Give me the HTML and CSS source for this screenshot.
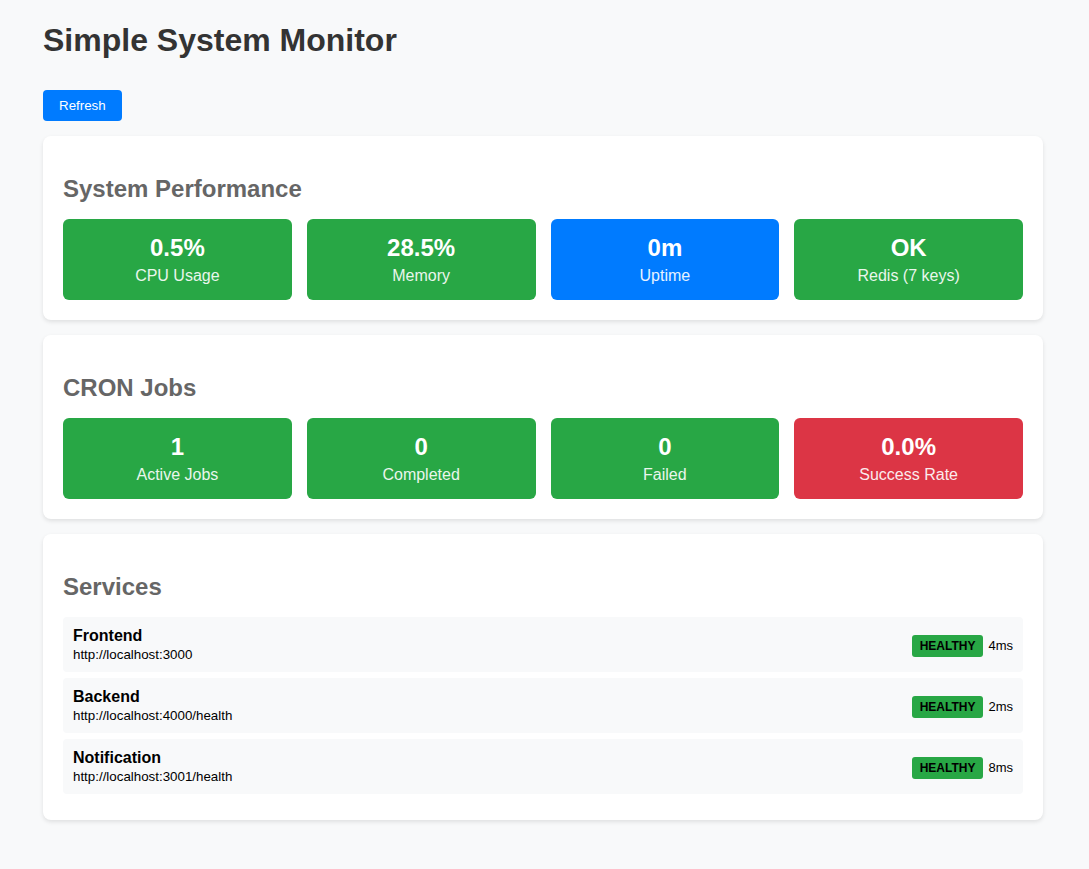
FILE: index.html
```html
<!DOCTYPE html>
<html lang="en">
<head>
<meta charset="utf-8">
<title>Simple System Monitor</title>
<link rel="stylesheet" href="styles.css">
</head>
<body>
<div class="page">
  <div class="container">
    <h1 class="title">Simple System Monitor</h1>
    <button class="btn-refresh">Refresh</button>

    <section class="card">
      <h2 class="card-title">System Performance</h2>
      <div class="metrics">
        <div class="metric green"><div class="metric-value">0.5%</div><div class="metric-label">CPU Usage</div></div>
        <div class="metric green"><div class="metric-value">28.5%</div><div class="metric-label">Memory</div></div>
        <div class="metric blue"><div class="metric-value">0m</div><div class="metric-label">Uptime</div></div>
        <div class="metric green"><div class="metric-value">OK</div><div class="metric-label">Redis (7 keys)</div></div>
      </div>
    </section>

    <section class="card">
      <h2 class="card-title">CRON Jobs</h2>
      <div class="metrics">
        <div class="metric green"><div class="metric-value">1</div><div class="metric-label">Active Jobs</div></div>
        <div class="metric green"><div class="metric-value">0</div><div class="metric-label">Completed</div></div>
        <div class="metric green"><div class="metric-value">0</div><div class="metric-label">Failed</div></div>
        <div class="metric red"><div class="metric-value">0.0%</div><div class="metric-label">Success Rate</div></div>
      </div>
    </section>

    <section class="card card-services">
      <h2 class="card-title">Services</h2>
      <div class="service">
        <div class="service-info"><div class="service-name">Frontend</div><div class="service-url">http://localhost:3000</div></div>
        <div class="service-status"><span class="badge">HEALTHY</span><span class="latency">4ms</span></div>
      </div>
      <div class="service">
        <div class="service-info"><div class="service-name">Backend</div><div class="service-url">http://localhost:4000/health</div></div>
        <div class="service-status"><span class="badge">HEALTHY</span><span class="latency">2ms</span></div>
      </div>
      <div class="service">
        <div class="service-info"><div class="service-name">Notification</div><div class="service-url">http://localhost:3001/health</div></div>
        <div class="service-status"><span class="badge">HEALTHY</span><span class="latency">8ms</span></div>
      </div>
    </section>
  </div>
</div>
</body>
</html>
```

FILE: styles.css
```css
* { box-sizing: border-box; }

html, body {
  margin: 0;
  background: #f8f9fa;
  font-family: "Liberation Sans", Arial, sans-serif;
  color: #000;
}

.page {
  padding: 22px 0 40px 43px;
}

.container {
  width: 1000px;
}

.title {
  margin: 0 0 31px;
  font-size: 32px;
  line-height: normal;
  font-weight: bold;
  color: #333;
}

.btn-refresh {
  display: block;
  height: 31px;
  padding: 8px 16px;
  border: none;
  border-radius: 4px;
  background: #007bff;
  color: #fff;
  font-family: "Liberation Sans", Arial, sans-serif;
  font-size: 13.33px;
  line-height: 15px;
  margin: 0 0 15px;
  cursor: pointer;
}

.card {
  background: #fff;
  border-radius: 8px;
  box-shadow: 0 2px 4px rgba(0, 0, 0, 0.1);
  padding: 20px;
  margin-bottom: 15px;
}

.card-title {
  margin: 19px 0 16px;
  font-size: 24px;
  line-height: 28px;
  font-weight: bold;
  color: #666;
}

.metrics {
  display: grid;
  grid-template-columns: repeat(4, 1fr);
  gap: 15px;
}

.metric {
  border-radius: 6px;
  padding: 15px;
  text-align: center;
  color: #fff;
}

.metric.green { background: #28a745; }
.metric.blue { background: #007bff; }
.metric.red { background: #dc3545; }

.metric-value {
  font-size: 24px;
  line-height: 27.6px;
  font-weight: bold;
  margin-bottom: 5px;
}

.metric-label {
  font-size: 16px;
  line-height: 18.4px;
  opacity: 0.9;
}

.service {
  display: flex;
  justify-content: space-between;
  align-items: center;
  height: 55px;
  background: #f8f9fa;
  border-radius: 4px;
  padding: 10px 10px 10px;
  margin-bottom: 6px;
}

.service-name {
  font-size: 16px;
  line-height: 18.4px;
  font-weight: bold;
  margin-bottom: 1px;
}

.service-url {
  font-size: 13.33px;
  line-height: 15.3px;
}

.service-status {
  display: flex;
  align-items: center;
  margin-top: 2px;
}

.badge {
  background: #28a745;
  color: #000;
  font-size: 12px;
  line-height: 14px;
  font-weight: bold;
  padding: 4px 8px;
  border-radius: 3px;
}

.latency {
  margin-left: 5px;
  font-size: 13px;
}
```
